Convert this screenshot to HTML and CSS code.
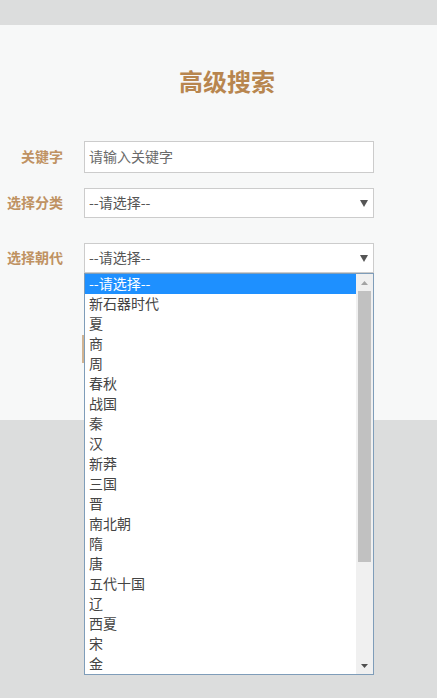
FILE: index.html
```html
<!DOCTYPE html>
<html lang="zh-CN">
<head>
<meta charset="utf-8">
<title>高级搜索</title>
<link rel="stylesheet" href="styles.css">
</head>
<body>
<div class="topbar"></div>
<div class="panel">
  <h1 class="title">高级搜索</h1>
  <div class="form">
    <div class="row row-kw">
      <label class="label">关键字</label>
      <input class="field input" type="text" placeholder="请输入关键字">
    </div>
    <div class="row row-cat">
      <label class="label">选择分类</label>
      <div class="field select">
        <span class="select-text">--请选择--</span>
        <svg class="arrow" width="8" height="7" viewBox="0 0 8 7"><path d="M0 0H8L4 7Z" fill="#555"/></svg>
      </div>
    </div>
    <div class="row row-dyn">
      <label class="label">选择朝代</label>
      <div class="select-wrap">
        <div class="field select">
          <span class="select-text">--请选择--</span>
          <svg class="arrow" width="8" height="7" viewBox="0 0 8 7"><path d="M0 0H8L4 7Z" fill="#555"/></svg>
        </div>
        <div class="dropdown">
          <ul class="options">
            <li class="opt opt-active">--请选择--</li>
            <li class="opt">新石器时代</li>
            <li class="opt">夏</li>
            <li class="opt">商</li>
            <li class="opt">周</li>
            <li class="opt">春秋</li>
            <li class="opt">战国</li>
            <li class="opt">秦</li>
            <li class="opt">汉</li>
            <li class="opt">新莽</li>
            <li class="opt">三国</li>
            <li class="opt">晋</li>
            <li class="opt">南北朝</li>
            <li class="opt">隋</li>
            <li class="opt">唐</li>
            <li class="opt">五代十国</li>
            <li class="opt">辽</li>
            <li class="opt">西夏</li>
            <li class="opt">宋</li>
            <li class="opt">金</li>
          </ul>
          <div class="scrollbar">
            <div class="sb-btn"><svg width="7" height="4" viewBox="0 0 7 4"><path d="M0 4L3.5 0L7 4Z" fill="#a3a3a3"/></svg></div>
            <div class="sb-track"><div class="sb-thumb"></div></div>
            <div class="sb-btn"><svg width="7" height="4" viewBox="0 0 7 4"><path d="M0 0H7L3.5 4Z" fill="#505050"/></svg></div>
          </div>
        </div>
      </div>
    </div>
    <div class="row row-btn">
      <button class="btn" type="button">搜索</button>
    </div>
  </div>
</div>
<div class="bottom"></div>
</body>
</html>
```

FILE: styles.css
```css
* { box-sizing: border-box; }
html, body {
  margin: 0;
  padding: 0;
}
body {
  background: #dcdddd;
  font-family: "Noto Sans CJK SC", "Noto Sans", sans-serif;
  color: #444;
}
.topbar {
  height: 25px;
  background: #dcdddd;
}
.panel {
  position: relative;
  z-index: 1;
  height: 395px;
  background: #f7f8f8;
  padding-top: 41px;
}
.bottom {
  height: 278px;
  background: #dcdddd;
}
.title {
  margin: 0;
  text-align: center;
  font-size: 24px;
  line-height: 30px;
  font-weight: bold;
  color: #b8864f;
  padding-left: 17px;
}
.form {
  margin-top: 45px;
}
.row {
  display: flex;
  align-items: center;
  gap: 21px;
}
.row-cat { margin-top: 15px; }
.row-dyn { margin-top: 25px; }
.row-btn { margin-top: 62px; padding-left: 82px; }
.label {
  width: 63px;
  flex: none;
  text-align: right;
  font-size: 14px;
  font-weight: bold;
  color: #bf9262;
  line-height: 20px;
  padding-bottom: 2px;
}
.field {
  width: 290px;
  background: #fff;
  border: 1px solid #cccccc;
  font-family: inherit;
  font-size: 14px;
  color: #555;
}
.input {
  height: 32px;
  padding: 0 4px 2px;
  outline: none;
}
.input::placeholder { color: #6a6a6a; }
.select {
  height: 30px;
  display: flex;
  align-items: center;
  justify-content: space-between;
  padding: 0 5px 0 4px;
}
.select-text { line-height: 20px; color: #555; padding-bottom: 3px; }
.arrow { display: block; }
.select-wrap {
  position: relative;
  width: 290px;
}
.dropdown {
  position: absolute;
  left: 0;
  top: 30px;
  width: 290px;
  height: 402px;
  background: #fff;
  border: 1px solid #7f9db9;
  display: flex;
  z-index: 2;
}
.options {
  list-style: none;
  margin: 0;
  padding: 0;
  flex: 1;
}
.opt {
  height: 20px;
  line-height: 18px;
  padding-left: 4px;
  font-size: 14px;
  color: #444;
  white-space: nowrap;
}
.opt-active {
  background: #1e90ff;
  color: #fff;
}
.scrollbar {
  width: 17px;
  flex: none;
  background: #f0f0f0;
  display: flex;
  flex-direction: column;
}
.sb-btn {
  height: 17px;
  display: flex;
  align-items: center;
  justify-content: center;
}
.sb-track {
  flex: 1;
  padding: 0 2px;
}
.sb-thumb {
  height: 271px;
  background: #c1c1c1;
}
.btn {
  width: 120px;
  height: 28px;
  border: none;
  background: #d2b391;
  color: #fff;
  font-family: inherit;
  font-size: 14px;
}
```
